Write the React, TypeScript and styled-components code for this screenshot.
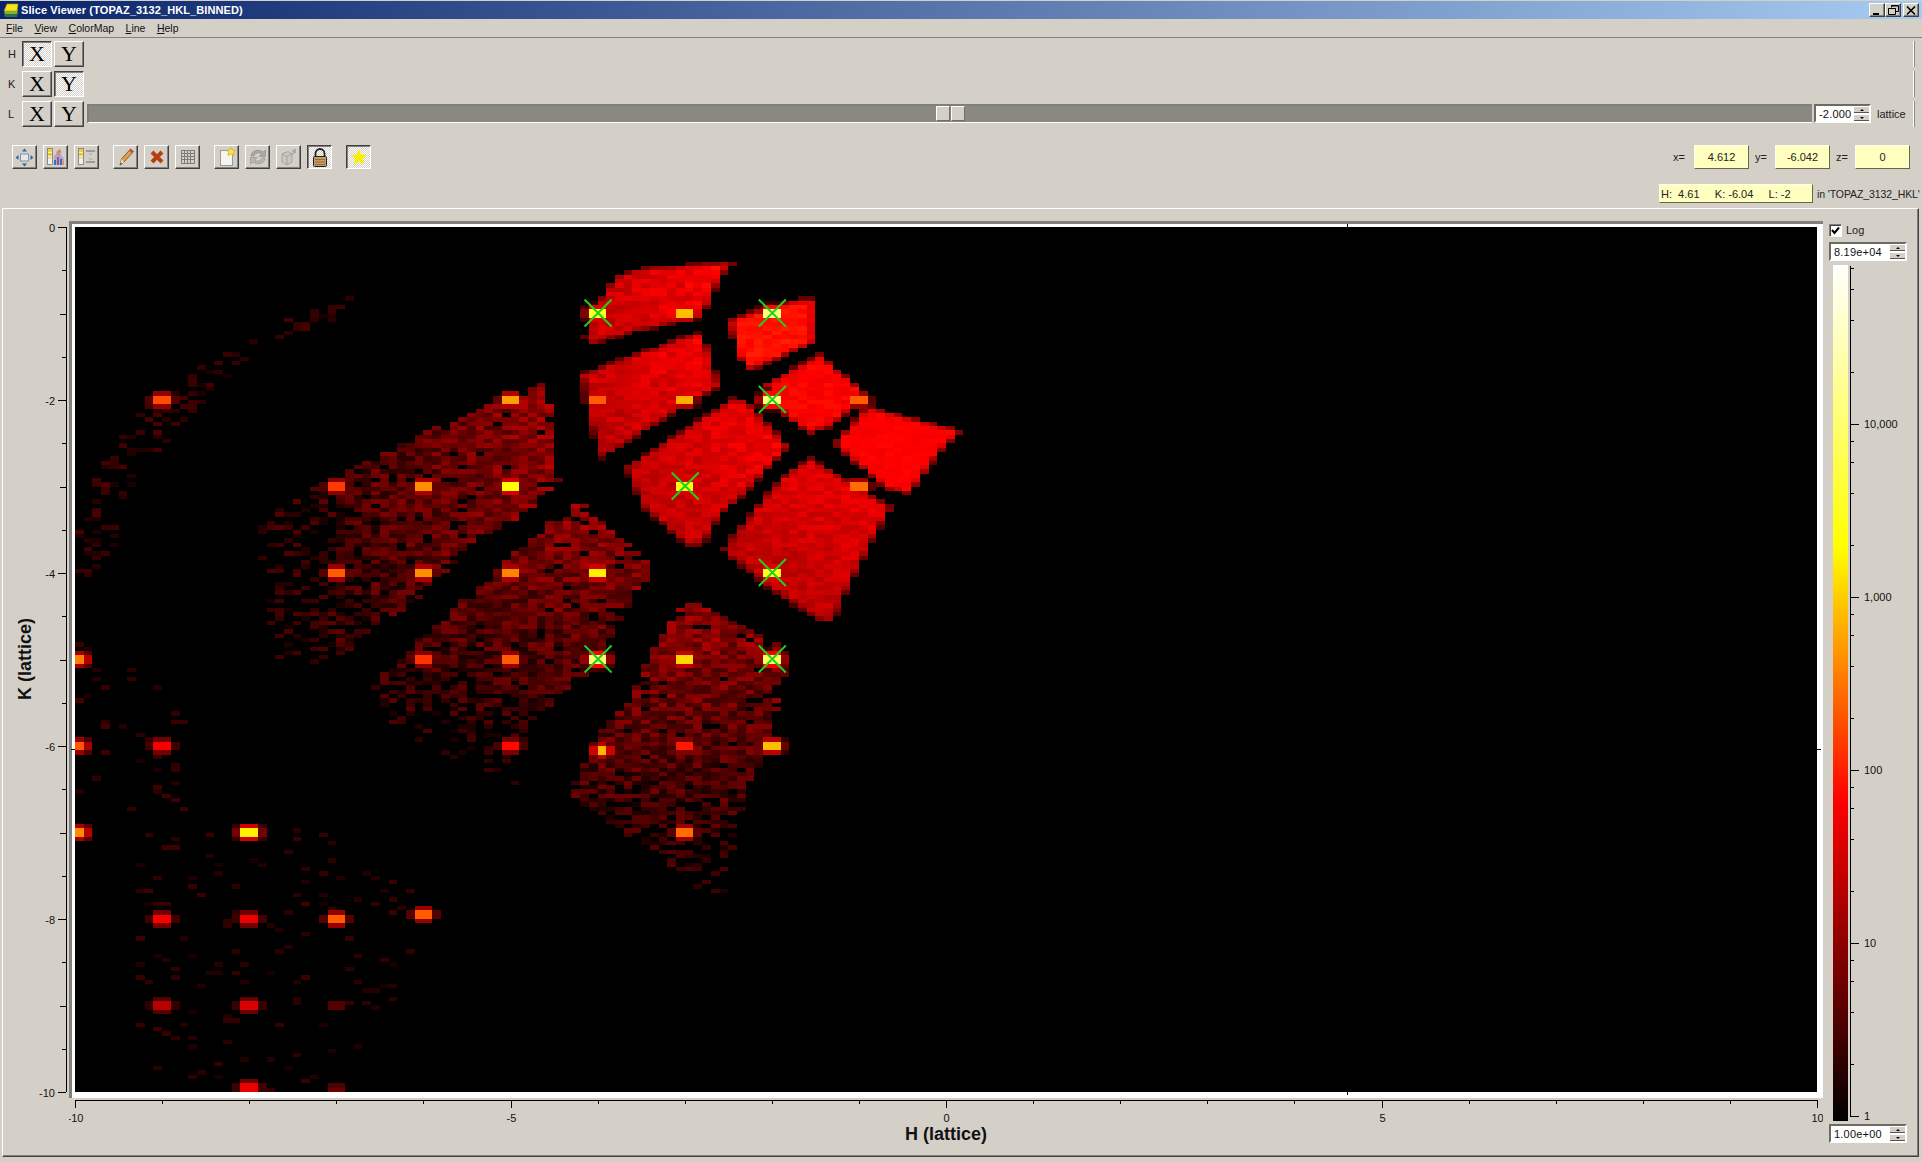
import { useMemo } from "react";
import styled, { createGlobalStyle, css } from "styled-components";

const FACE = "#d4d0c8";
const FONT = `"Liberation Sans", Arial, sans-serif`;

const GlobalStyle = createGlobalStyle`
  html, body { margin: 0; padding: 0; background: ${FACE}; }
  body { font-family: ${FONT}; font-size: 11px; color: #000; overflow: hidden; }
`;

const raised = css`
  border: 1px solid;
  border-color: #fff #404040 #404040 #fff;
  box-shadow: inset -1px -1px 0 #808080;
`;
const pressed = css`
  border: 1px solid;
  border-color: #404040 #fff #fff #404040;
  box-shadow: inset 1px 1px 0 #808080;
  background: repeating-conic-gradient(#fff 0 25%, #d4d0c8 0 50%) 0 0 / 2px 2px;
`;

const Window = styled.div`
  width: 1922px;
  height: 1162px;
  background: ${FACE};
  display: flex;
  flex-direction: column;
  overflow: hidden;
`;
const TitleBar = styled.div`
  height: 18px;
  margin: 1px 0 0 0;
  padding: 0 3px 0 3px;
  display: flex;
  align-items: center;
  background: linear-gradient(90deg, #0a246a 0%, #a6caf0 100%);
  color: #fff;
  font-weight: bold;
  font-size: 11px;
  flex: none;
`;
const TitleText = styled.span`
  margin-left: 2px;
  flex: 1;
  letter-spacing: 0.1px;
`;
const CaptionButton = styled.button<{ $gap?: number }>`
  width: 16px;
  height: 14px;
  margin-left: ${(p) => p.$gap ?? 0}px;
  padding: 0;
  background: ${FACE};
  ${raised}
  display: flex;
  align-items: center;
  justify-content: center;
`;
const MenuBar = styled.div`
  height: 18px;
  padding-left: 6px;
  display: flex;
  align-items: center;
  gap: 11.5px;
  border-bottom: 1px solid #808080;
  flex: none;
  color: #111;
  font-size: 10.5px;
`;
const Mnemonic = styled.span`
  text-decoration: underline;
`;
const Controls = styled.div`
  height: 170px;
  padding-top: 3px;
  box-sizing: border-box;
  display: flex;
  flex-direction: column;
  flex: none;
`;
const AxisRow = styled.div`
  height: 26px;
  margin-bottom: 4px;
  padding-right: 7px;
  display: flex;
  flex: none;
`;
const AxisLetter = styled.div`
  width: 14px;
  padding-left: 8px;
  display: flex;
  align-items: center;
  color: #222;
`;
const AxisButton = styled.button<{ $on?: boolean }>`
  width: 30px;
  height: 26px;
  margin-right: 2px;
  padding: 0;
  font-family: "Liberation Serif", "Times New Roman", serif;
  font-size: 22px;
  line-height: 22px;
  color: #000;
  background: ${FACE};
  ${(p) => (p.$on ? pressed : raised)}
`;
const Slider = styled.div`
  position: relative;
  flex: 1;
  height: 16px;
  margin: 3px 0 0 1px;
  background: #8a8981;
  border-top: 2px solid #7f7e79;
  border-left: 2px solid #7f7e79;
  box-sizing: content-box;
  border-bottom: 1px solid #fff;
  align-self: flex-start;
`;
const Handle = styled.div<{ $left: number }>`
  position: absolute;
  top: 0;
  left: ${(p) => p.$left}px;
  width: 14px;
  height: 15px;
  box-sizing: border-box;
  background: ${FACE};
  border: 1px solid;
  border-color: #fff #70706a #70706a #fff;
`;
const EdgeRule = styled.div<{ $push?: boolean }>`
  width: 1px;
  margin-left: ${(p) => (p.$push ? "auto" : "0")};
  background: #8f8d87;
  box-shadow: -1px 0 0 #fff;
`;
const Spin = styled.div<{ $w: number }>`
  width: ${(p) => p.$w}px;
  height: 19px;
  box-sizing: border-box;
  display: flex;
  align-items: center;
  background: #fff;
  border: 2px solid;
  border-color: #6c6b66 #fff #fff #6c6b66;
  flex: none;
`;
const SpinText = styled.div`
  flex: 1;
  padding-left: 3px;
  white-space: nowrap;
  color: #111;
  letter-spacing: 0.2px;
`;
const SpinArrows = styled.div`
  width: 15px;
  height: 15px;
  display: flex;
  flex-direction: column;
  gap: 1px;
  flex: none;
`;
const SpinArrow = styled.div<{ $down?: boolean }>`
  flex: 1;
  background: ${FACE};
  border-top: 1px solid #fff;
  border-bottom: 1px solid #555;
  display: flex;
  align-items: center;
  justify-content: center;
  &::after {
    content: "";
    border-left: 2px solid transparent;
    border-right: 2px solid transparent;
    ${(p) => (p.$down ? "border-top: 2px solid #000;" : "border-bottom: 2px solid #000;")}
  }
`;
const UnitText = styled.div`
  margin-left: 6px;
  display: flex;
  align-items: center;
  color: #222;
  width: 37px;
`;
const SpinSlot = styled.div`
  margin: 3px 0 0 2px;
`;
const ToolRow = styled.div`
  margin-top: 14px;
  height: 24px;
  padding-left: 12px;
  padding-right: 12px;
  display: flex;
  align-items: stretch;
  flex: none;
`;
const ToolGroup = styled.div<{ $gap?: number }>`
  display: flex;
  gap: 6px;
  margin-right: ${(p) => p.$gap ?? 14}px;
`;
const ToolButton = styled.button<{ $on?: boolean }>`
  width: 25px;
  height: 24px;
  padding: 0;
  background: ${FACE};
  display: flex;
  align-items: center;
  justify-content: center;
  ${(p) => (p.$on ? pressed : raised)}
`;
const Coords = styled.div`
  margin-left: auto;
  display: flex;
  align-items: stretch;
  color: #222;
`;
const CoordLabel = styled.div<{ $w: number; $inset?: boolean }>`
  width: ${(p) => p.$w}px;
  padding-left: ${(p) => (p.$inset ? 6 : 0)}px;
  box-sizing: border-box;
  display: flex;
  align-items: center;
`;
const Readout = styled.div<{ $w: number }>`
  width: ${(p) => p.$w}px;
  box-sizing: border-box;
  background: #ffffc0;
  border: 1px solid;
  border-color: #ffffe8 #66664c #66664c #ffffe8;
  display: flex;
  align-items: center;
  justify-content: center;
  color: #222;
  white-space: pre;
`;
const InfoRow = styled.div`
  margin-top: 15px;
  height: 19px;
  display: flex;
  justify-content: flex-end;
  flex: none;
`;
const InfoBox = styled(Readout)`
  justify-content: flex-start;
  padding-left: 1px;
`;
const InfoText = styled.div`
  width: 105px;
  margin-left: 4px;
  white-space: nowrap;
  display: flex;
  align-items: center;
  color: #222;
  font-size: 10.5px;
  letter-spacing: -0.1px;
`;
const PlotPanel = styled.div`
  width: 1917px;
  height: 949px;
  margin-left: 2px;
  box-sizing: border-box;
  border: 1px solid;
  border-color: #fff #404040 #404040 #fff;
  box-shadow: inset -1px -1px 0 #808080;
  display: grid;
  grid-template-columns: 66px 1754px 1fr;
  grid-template-rows: 12px 877px 1fr;
  flex: none;
`;
const YAxisSlot = styled.div`
  grid-column: 1;
  grid-row: 2;
`;
const XAxisSlot = styled.div`
  grid-column: 2;
  grid-row: 3;
`;
const Frame = styled.div`
  grid-column: 2;
  grid-row: 2;
  background: #fff;
  border-top: 3px solid #808080;
  border-left: 3px solid #808080;
  padding: 3px 6px 6px 3px;
  box-sizing: border-box;
`;
const Heatmap = styled.svg`
  display: block;
  background: #000;
  overflow: visible;
`;
const ScaleColumn = styled.div`
  grid-column: 3;
  grid-row: 1 / 4;
  padding: 15px 0 0 6px;
  display: flex;
  flex-direction: column;
  color: #222;
`;
const LogRow = styled.div`
  height: 13px;
  display: flex;
  align-items: center;
  gap: 4px;
  margin-bottom: 5px;
  line-height: 11px;
`;
const CheckBox = styled.div`
  width: 13px;
  height: 13px;
  box-sizing: border-box;
  background: #fff;
  border: 1px solid;
  border-color: #808080 #fff #fff #808080;
  box-shadow: inset 1px 1px 0 #404040;
  display: flex;
  align-items: center;
  justify-content: center;
`;
const ScaleBody = styled.div`
  height: 859px;
  margin: 4px 0 0 4px;
  display: flex;
  flex: none;
`;
const ColorBar = styled.div`
  width: 15px;
  height: 856px;
  margin-right: 2px;
  background: linear-gradient(0deg, #000 0%, #ff0000 37.5%, #ffff00 67%, #ffffff 100%);
`;
const AxisSvg = styled.svg`
  display: block;
  font-family: ${FONT};
  font-size: 11px;
`;

// detector panels in screen pixels, taken from the crops they were read off
type Pt = [number, number];
const crop = (ox: number, oy: number, pts: number[]): Pt[] => {
  const out: Pt[] = [];
  for (let i = 0; i < pts.length; i += 2) out.push([ox + pts[i] / 3, oy + pts[i + 1] / 3]);
  return out;
};
interface Region {
  pts: Pt[];
  base: number;
  noise: number;
  keep: number;
  tiltX?: number;
  tiltY?: number;
  edge?: boolean;
  fray?: number;
}
const REGIONS: Region[] = [
  { pts: crop(540, 240, [130, 300, 150, 220, 225, 105, 305, 80, 590, 60, 540, 115, 490, 235, 300, 275, 150, 320]), base: 0.33, noise: 0.04, keep: 1, tiltX: 0.08, edge: true },
  { pts: crop(540, 240, [565, 240, 625, 215, 770, 175, 825, 175, 825, 310, 770, 335, 630, 395, 590, 350]), base: 0.395, noise: 0.018, keep: 1, edge: true },
  { pts: crop(540, 240, [120, 400, 225, 360, 440, 285, 490, 275, 540, 440, 420, 510, 250, 620, 180, 660, 150, 560]), base: 0.315, noise: 0.04, keep: 1, tiltX: 0.06, tiltY: -0.04, edge: true },
  { pts: crop(540, 240, [670, 430, 840, 340, 960, 440, 960, 490, 880, 560, 810, 585, 730, 530]), base: 0.37, noise: 0.02, keep: 1, edge: true },
  { pts: crop(540, 240, [880, 610, 980, 495, 1270, 570, 1200, 640, 1110, 765, 1040, 750, 930, 660]), base: 0.37, noise: 0.012, keep: 1, edge: true },
  { pts: crop(540, 240, [252, 680, 580, 470, 620, 480, 750, 620, 620, 760, 540, 830, 490, 920, 440, 920, 310, 810]), base: 0.315, noise: 0.035, keep: 1, tiltX: 0.07, tiltY: -0.04, edge: true },
  { pts: crop(540, 240, [540, 930, 720, 710, 810, 650, 1060, 800, 1000, 900, 930, 1040, 880, 1150, 830, 1140, 700, 1060]), base: 0.305, noise: 0.035, keep: 1, tiltX: 0.04, tiltY: -0.07, edge: true },
  { pts: crop(240, 370, [30, 460, 130, 400, 290, 320, 480, 225, 640, 150, 790, 90, 915, 30, 970, 330, 850, 440, 700, 530, 520, 700, 420, 760, 320, 850, 200, 890, 100, 870, 60, 640]), base: 0.12, noise: 0.07, keep: 0.95, tiltX: 0.17, tiltY: -0.04, fray: 14 },
  { pts: crop(240, 370, [1020, 390, 1250, 600, 1180, 690, 1120, 780, 1100, 870, 940, 1000, 860, 1120, 830, 1240, 780, 1240, 600, 1170, 470, 1080, 400, 960, 450, 880, 530, 810, 640, 720, 780, 580, 900, 480]), base: 0.115, noise: 0.07, keep: 0.95, tiltX: 0.05, tiltY: -0.17, fray: 14 },
  { pts: crop(560, 600, [380, 0, 480, 40, 600, 100, 700, 150, 660, 280, 640, 400, 600, 500, 560, 580, 540, 680, 510, 810, 490, 880, 300, 830, 200, 700, 40, 600, 40, 520, 100, 420, 200, 300, 250, 180, 330, 70]), base: 0.125, noise: 0.07, keep: 0.95, tiltY: -0.17, fray: 14 },
  { pts: [[355, 296], [340, 320], [260, 345], [205, 400], [175, 430], [130, 490], [110, 560], [75, 590], [75, 540], [100, 470], [140, 410], [170, 385], [230, 350], [280, 320]], base: 0.075, noise: 0.035, keep: 0.28 },
  { pts: [[75, 630], [130, 640], [190, 700], [190, 810], [110, 810], [75, 790]], base: 0.07, noise: 0.03, keep: 0.07 },
  { pts: [[140, 830], [330, 830], [440, 900], [400, 1000], [320, 1092], [140, 1092]], base: 0.065, noise: 0.03, keep: 0.07 },
];

// Bragg peaks: h, k, peak level on the log scale
const PEAKS: [number, number, number][] = [
  [-4, -1, 0.74], [-3, -1, 0.62], [-2, -1, 0.86], [-4, -2, 0.5], [-3, -2, 0.6], [-2, -2, 0.86],
  [-1, -2, 0.5], [-5, -2, 0.58], [-3, -3, 0.72], [-1, -3, 0.52], [-2, -4, 0.74], [-4, -4, 0.68],
  [-5, -3, 0.7], [-6, -3, 0.56], [-7, -3, 0.46], [-5, -4, 0.55], [-6, -4, 0.56], [-7, -4, 0.5],
  [-4, -5, 0.85], [-5, -5, 0.5], [-6, -5, 0.45], [-3, -5, 0.65], [-2, -5, 0.82], [-5, -6, 0.4],
  [-3.95, -6.05, 0.52], [-3, -6, 0.42], [-2, -6, 0.62], [-3, -7, 0.52], [-9, -2, 0.48], [-9.95, -5, 0.46],
  [-9.95, -6, 0.42], [-9, -6, 0.38], [-9.95, -7, 0.47], [-8, -7, 0.68], [-9, -8, 0.38], [-8, -8, 0.36],
  [-7, -8, 0.5], [-6, -7.95, 0.5], [-9, -9, 0.28], [-8, -9, 0.33], [-7, -9, 0.13], [-8, -9.95, 0.36], [-7, -9.97, 0.15],
];

const CROSSES: [number, number][] = [[-4, -1], [-2, -1], [-2, -2], [-3, -3], [-2, -4], [-4, -5], [-2, -5]];

const PLOT_X = 75;
const PLOT_Y = 227;
const PLOT_W = 1742;
const PLOT_H = 865;
const BINS = 200;
const hToX = (h: number) => (h + 10) * (PLOT_W / 20);
const kToY = (k: number) => -k * (PLOT_H / 10);

const rng = (seed: number) => () => {
  seed = (seed + 0x6d2b79f5) | 0;
  let t = Math.imul(seed ^ (seed >>> 15), 1 | seed);
  t = (t + Math.imul(t ^ (t >>> 7), 61 | t)) ^ t;
  return ((t ^ (t >>> 14)) >>> 0) / 4294967296;
};

const inside = (x: number, y: number, pts: Pt[]) => {
  let hit = false;
  for (let i = 0, j = pts.length - 1; i < pts.length; j = i++) {
    const [xi, yi] = pts[i];
    const [xj, yj] = pts[j];
    if (yi > y !== yj > y && x < ((xj - xi) * (y - yi)) / (yj - yi) + xi) hit = !hit;
  }
  return hit;
};

const edgeDistance = (x: number, y: number, pts: Pt[]) => {
  let best = Infinity;
  for (let i = 0, j = pts.length - 1; i < pts.length; j = i++) {
    const [ax, ay] = pts[j];
    const [bx, by] = pts[i];
    const dx = bx - ax;
    const dy = by - ay;
    const u = Math.max(0, Math.min(1, ((x - ax) * dx + (y - ay) * dy) / (dx * dx + dy * dy)));
    best = Math.min(best, Math.hypot(x - ax - u * dx, y - ay - u * dy));
  }
  return best;
};

const colorFor = (t: number) => {
  const hex = (v: number) => Math.round(Math.max(0, Math.min(255, v))).toString(16).padStart(2, "0");
  if (t < 0.375) return `#${hex((t / 0.375) * 255)}0000`;
  if (t < 0.67) return `#ff${hex(((t - 0.375) / 0.295) * 255)}00`;
  return `#ffff${hex(((t - 0.67) / 0.33) * 255)}`;
};

const buildCells = () => {
  const rand = rng(3132);
  const grid = new Float32Array(BINS * BINS);
  const cw = PLOT_W / BINS;
  const ch = PLOT_H / BINS;
  for (const r of REGIONS) {
    const xs = r.pts.map((p) => p[0]);
    const ys = r.pts.map((p) => p[1]);
    const minX = Math.min(...xs);
    const maxX = Math.max(...xs);
    const minY = Math.min(...ys);
    const maxY = Math.max(...ys);
    for (let row = 0; row < BINS; row++) {
      for (let col = 0; col < BINS; col++) {
        const x = PLOT_X + (col + 0.5) * cw;
        const y = PLOT_Y + (row + 0.5) * ch;
        if (!inside(x, y, r.pts)) continue;
        const nx = (x - minX) / (maxX - minX) - 0.5;
        const ny = (y - minY) / (maxY - minY) - 0.5;
        const mean = r.base + (r.tiltX ?? 0) * nx + (r.tiltY ?? 0) * ny;
        let t = mean + (rand() * 2 - 1) * r.noise;
        let chance = r.keep * Math.min(1, mean / (r.base * 0.8));
        if (r.fray) chance *= Math.min(1, 0.5 + edgeDistance(x, y, r.pts) / r.fray);
        if (rand() > chance) continue;
        if (r.edge) t *= Math.min(1, edgeDistance(x, y, r.pts) / 8 + 0.35);
        grid[row * BINS + col] = Math.max(grid[row * BINS + col], t);
      }
    }
  }
  for (const [h, k, peak] of PEAKS) {
    const cx = hToX(h) / cw;
    const cy = kToY(k) / ch;
    for (let row = Math.floor(cy) - 6; row <= cy + 6; row++) {
      for (let col = Math.floor(cx) - 3; col <= cx + 3; col++) {
        if (row < 0 || col < 0 || row >= BINS || col >= BINS) continue;
        const dx = col + 0.5 - cx;
        const dy = row + 0.5 - cy;
        const t = 1.25 * peak * Math.exp(-(dx * dx) / 1.5 - (dy * dy) / 2.6);
        if (t > 0.07) grid[row * BINS + col] = Math.max(grid[row * BINS + col], t);
      }
    }
  }
  const cells: { x: number; y: number; fill: string }[] = [];
  grid.forEach((t, i) => {
    if (t > 0.035) cells.push({ x: i % BINS, y: Math.floor(i / BINS), fill: colorFor(t) });
  });
  return cells;
};

const TitleIcon = () => (
  <svg width="16" height="15" viewBox="0 0 16 15">
    <path d="M1 12 L3 9 H15 L14 14 H2 Z" fill="#2f6f3a" />
    <path d="M1 9.5 L3 7 H15 L14 11 H2 Z" fill="#79b23c" />
    <path d="M1 8 L4 1 H15 L14 8 Z" fill="#f4e51c" stroke="#a89a10" strokeWidth="0.6" />
  </svg>
);

const IconMove = () => (
  <svg width="19" height="19" viewBox="0 0 19 19">
    <rect x="5.5" y="6" width="8" height="7" fill="#e8e8ec" stroke="#8a8f98" />
    <path d="M9.5 0.5 L12 3.5 H7 Z M9.5 18.5 L12 15.5 H7 Z" fill="#2a62b0" />
    <path d="M0.5 9.5 L3.5 7 V12 Z M18.5 9.5 L15.5 7 V12 Z" fill="#2a62b0" />
  </svg>
);
const Swatch = () => (
  <>
    <rect x="1.5" y="1.5" width="5" height="16" fill="#f2f2f2" stroke="#777" strokeWidth="0.8" />
    <rect x="2" y="2" width="4" height="3" fill="#f6d51f" />
    <rect x="2" y="6" width="4" height="2.5" fill="#f2c019" />
    <rect x="2" y="9.5" width="4" height="2.5" fill="#e9e08a" />
  </>
);
const IconColorChart = () => (
  <svg width="20" height="20" viewBox="0 0 20 20">
    <Swatch />
    <path d="M8 18 V9 L11 6 L13 2 L15 8 L18 12 V18 Z" fill="#b9a0c8" />
    <path d="M10 5 L14 2 L15.5 5 L12 9 Z" fill="#d88a6c" />
    <rect x="8" y="13" width="2" height="5" fill="#3c6cc0" />
    <rect x="11" y="10" width="2" height="8" fill="#8c5a9c" />
    <rect x="14" y="12" width="2" height="6" fill="#3c6cc0" />
    <rect x="16.5" y="14" width="1.5" height="4" fill="#d8a040" />
  </svg>
);
const IconColorRange = () => (
  <svg width="20" height="20" viewBox="0 0 20 20">
    <Swatch />
    <path d="M9 4 H18 M9 15 H18" stroke="#666" strokeWidth="1" />
    <path d="M12 6 L13.5 8 L15 6 M12 13 L13.5 11 L15 13" stroke="#aaa" strokeWidth="1" fill="none" />
  </svg>
);
const IconPencil = () => (
  <svg width="20" height="20" viewBox="0 0 20 20">
    <path d="M4 18 L5.5 12 L14.5 2 L17.5 4.5 L8 15 Z" fill="#dfa24a" stroke="#6a4a1c" strokeWidth="0.8" />
    <path d="M14.5 2 L17.5 4.5 L16 6.3 L13 3.7 Z" fill="#c8503c" />
    <path d="M4 18 L5.5 12 L8 15 Z" fill="#f2dfb8" />
    <path d="M4 18 L4.6 15.8 L6 17 Z" fill="#222" />
  </svg>
);
const IconDelete = () => (
  <svg width="16" height="16" viewBox="0 0 16 16">
    <path d="M3 3 L13 13 M13 3 L3 13" stroke="#b8400f" strokeWidth="4" />
  </svg>
);
const IconGrid = () => (
  <svg width="16" height="16" viewBox="0 0 16 16">
    <path d="M1.5 1.5 H14.5 V14.5 H1.5 Z M1.5 4.5 H14.5 M1.5 7.5 H14.5 M1.5 10.5 H14.5 M4.5 1.5 V14.5 M7.5 1.5 V14.5 M10.5 1.5 V14.5" fill="none" stroke="#7c7c7c" strokeWidth="1" />
  </svg>
);
const IconNewDoc = () => (
  <svg width="20" height="20" viewBox="0 0 20 20">
    <rect x="3.5" y="3.5" width="12" height="15" fill="#f4f4f0" stroke="#9a9a90" />
    <path d="M14 0.5 L15.6 3 L18.5 3.4 L16.5 5.5 L17 8.5 L14 7 L11 8.5 L11.5 5.5 L9.5 3.4 L12.4 3 Z" fill="#f6e64a" stroke="#c8a818" strokeWidth="0.7" />
  </svg>
);
const IconRefresh = () => (
  <svg width="20" height="20" viewBox="0 0 20 20">
    <path d="M3 9 A7 6 0 0 1 15 5 L17.5 3 V9.5 H11 L13.5 7 A4.5 4 0 0 0 6 9 Z" fill="#a8a8a4" stroke="#8c8c88" strokeWidth="0.6" />
    <path d="M17 11 A7 6 0 0 1 5 15 L2.5 17 V10.5 H9 L6.5 13 A4.5 4 0 0 0 14 11 Z" fill="#b8b8b4" stroke="#8c8c88" strokeWidth="0.6" />
  </svg>
);
const IconCube = () => (
  <svg width="20" height="20" viewBox="0 0 20 20">
    <path d="M3 7 L9 4.5 L13 7 V15 L8 18 L3 15 Z" fill="#c8c8c4" stroke="#a4a4a0" />
    <path d="M3 7 L8 9.5 L13 7 M8 9.5 V18" fill="none" stroke="#a4a4a0" />
    <path d="M12 4 L17 1.5 V6.5 L15.5 5.8 L13.5 8 L12.5 7 L14.3 4.9 Z" fill="#a8a8a4" />
  </svg>
);
const IconLock = () => (
  <svg width="20" height="21" viewBox="0 0 20 21">
    <path d="M5.5 10 V6.5 A4.5 4.5 0 0 1 14.5 6.5 V10" fill="none" stroke="#222" strokeWidth="1.8" />
    <rect x="3.5" y="9.5" width="13" height="10" rx="1" fill="#c89a68" stroke="#222" />
    <path d="M5 12.5 H15 M5 15 H15 M5 17.5 H15" stroke="#8a6236" strokeWidth="0.8" />
  </svg>
);
const IconStar = () => (
  <svg width="18" height="18" viewBox="0 0 18 18">
    <path d="M9 1 L11.2 6.8 L17.4 7 L12.5 10.8 L14.2 16.8 L9 13.3 L3.8 16.8 L5.5 10.8 L0.6 7 L6.8 6.8 Z" fill="#f8f000" />
  </svg>
);

const MENU = [
  ["F", "ile"],
  ["V", "iew"],
  ["C", "olorMap"],
  ["L", "ine"],
  ["H", "elp"],
];

const YAxis = () => {
  const ticks = Array.from({ length: 21 }, (_, i) => -i / 2);
  return (
    <AxisSvg width="66" height="877">
      <line x1="63.5" x2="63.5" y1="6" y2="871" stroke="#000" />
      {ticks.map((k) => {
        const y = Math.round(6 + kToY(k)) + 0.5;
        const whole = Number.isInteger(k);
        const labelled = whole && k % 2 === 0;
        const len = labelled ? 8 : whole ? 6 : 4;
        return (
          <g key={k}>
            <line x1={63 - len} x2="63" y1={y} y2={y} stroke="#000" />
            {labelled && (
              <text x="52" y={y + 4} textAnchor="end" fill="#111">
                {k}
              </text>
            )}
          </g>
        );
      })}
      <text transform="translate(28 438) rotate(-90)" textAnchor="middle" fontWeight="bold" fontSize="18" fill="#111">
        K (lattice)
      </text>
    </AxisSvg>
  );
};

const XAxis = () => {
  const ticks = Array.from({ length: 21 }, (_, i) => i - 10);
  return (
    <AxisSvg width="1754" height="57">
      <line x1="6" x2="1748" y1="2.5" y2="2.5" stroke="#000" />
      {ticks.map((h) => {
        const x = Math.round(6 + hToX(h)) + 0.5;
        const labelled = h % 5 === 0;
        return (
          <g key={h}>
            <line x1={x} x2={x} y1="2" y2={labelled ? 10 : 6} stroke="#000" />
            {labelled && (
              <text x={x} y="24" textAnchor="middle" fill="#111">
                {h}
              </text>
            )}
          </g>
        );
      })}
      <text x="877" y="42" textAnchor="middle" fontWeight="bold" fontSize="18" fill="#111">
        H (lattice)
      </text>
    </AxisSvg>
  );
};

const ScaleAxis = () => {
  const decades = [1, 10, 100, 1000, 10000];
  const decadePx = 173;
  const toY = (v: number) => 851 - Math.log10(v) * decadePx;
  const labels = ["1", "10", "100", "1,000", "10,000"];
  return (
    <AxisSvg width="70" height="859">
      <line x1="0.5" x2="0.5" y1="1" y2="851" stroke="#000" />
      {decades.map((d, i) => (
        <g key={d}>
          <line x1="0" x2="9" y1={Math.round(toY(d)) + 0.5} y2={Math.round(toY(d)) + 0.5} stroke="#000" />
          <text x="14" y={toY(d) + 4} fill="#111">
            {labels[i]}
          </text>
          {[2, 4, 6, 8].map((m) => (
            <line key={m} x1="0" x2="4" y1={Math.round(toY(d * m)) + 0.5} y2={Math.round(toY(d * m)) + 0.5} stroke="#000" />
          ))}
        </g>
      ))}
    </AxisSvg>
  );
};

const SpinBox = ({ value, width }: { value: string; width: number }) => (
  <Spin $w={width}>
    <SpinText>{value}</SpinText>
    <SpinArrows>
      <SpinArrow />
      <SpinArrow $down />
    </SpinArrows>
  </Spin>
);

const AxisToggle = ({ letter, on }: { letter: string; on: "X" | "Y" | null }) => (
  <>
    <AxisLetter>{letter}</AxisLetter>
    <AxisButton $on={on === "X"}>X</AxisButton>
    <AxisButton $on={on === "Y"}>Y</AxisButton>
  </>
);

export default function App() {
  const cells = useMemo(buildCells, []);
  return (
    <Window>
      <GlobalStyle />
      <TitleBar>
        <TitleIcon />
        <TitleText>Slice Viewer (TOPAZ_3132_HKL_BINNED)</TitleText>
        <CaptionButton>
          <svg width="10" height="9" viewBox="0 0 10 9">
            <rect x="1" y="7" width="6" height="2" fill="#000" />
          </svg>
        </CaptionButton>
        <CaptionButton>
          <svg width="11" height="10" viewBox="0 0 11 10">
            <path d="M3.5 2.5 V0.5 H10.5 V6.5 H8 M0.5 3.5 H7.5 V9.5 H0.5 Z M0.5 3.5 H7.5 M3.5 1 H10.5" fill="none" stroke="#000" />
          </svg>
        </CaptionButton>
        <CaptionButton $gap={2}>
          <svg width="10" height="9" viewBox="0 0 10 9">
            <path d="M1 0.5 L9 8.5 M9 0.5 L1 8.5" stroke="#000" strokeWidth="1.6" />
          </svg>
        </CaptionButton>
      </TitleBar>
      <MenuBar>
        {MENU.map(([first, rest]) => (
          <span key={first}>
            <Mnemonic>{first}</Mnemonic>
            {rest}
          </span>
        ))}
      </MenuBar>
      <Controls>
        <AxisRow>
          <AxisToggle letter="H" on="X" />
          <EdgeRule $push />
        </AxisRow>
        <AxisRow>
          <AxisToggle letter="K" on="Y" />
          <EdgeRule $push />
        </AxisRow>
        <AxisRow>
          <AxisToggle letter="L" on={null} />
          <Slider>
            <Handle $left={847} />
            <Handle $left={862} />
          </Slider>
          <SpinSlot>
            <SpinBox value="-2.000" width={57} />
          </SpinSlot>
          <UnitText>lattice</UnitText>
          <EdgeRule />
        </AxisRow>
        <ToolRow>
          <ToolGroup>
            <ToolButton><IconMove /></ToolButton>
            <ToolButton><IconColorChart /></ToolButton>
            <ToolButton><IconColorRange /></ToolButton>
          </ToolGroup>
          <ToolGroup>
            <ToolButton><IconPencil /></ToolButton>
            <ToolButton><IconDelete /></ToolButton>
            <ToolButton><IconGrid /></ToolButton>
          </ToolGroup>
          <ToolGroup>
            <ToolButton><IconNewDoc /></ToolButton>
            <ToolButton><IconRefresh /></ToolButton>
            <ToolButton><IconCube /></ToolButton>
            <ToolButton $on><IconLock /></ToolButton>
          </ToolGroup>
          <ToolGroup $gap={0}>
            <ToolButton $on><IconStar /></ToolButton>
          </ToolGroup>
          <Coords>
            <CoordLabel $w={21}>x=</CoordLabel>
            <Readout $w={55}>4.612</Readout>
            <CoordLabel $w={26} $inset>y=</CoordLabel>
            <Readout $w={55}>-6.042</Readout>
            <CoordLabel $w={25} $inset>z=</CoordLabel>
            <Readout $w={55}>0</Readout>
          </Coords>
        </ToolRow>
        <InfoRow>
          <InfoBox $w={154}>{"H:  4.61     K: -6.04     L: -2"}</InfoBox>
          <InfoText>in 'TOPAZ_3132_HKL'</InfoText>
        </InfoRow>
      </Controls>
      <PlotPanel>
        <YAxisSlot>
          <YAxis />
        </YAxisSlot>
        <Frame>
          <Heatmap width={PLOT_W} height={PLOT_H}>
            <svg viewBox={`0 0 ${BINS} ${BINS}`} width={PLOT_W} height={PLOT_H} preserveAspectRatio="none" shapeRendering="crispEdges">
              {cells.map((c) => (
                <rect key={`${c.x}:${c.y}`} x={c.x} y={c.y} width="1" height="1" fill={c.fill} />
              ))}
            </svg>
            {CROSSES.map(([h, k]) => {
              const x = hToX(h) + 0.5;
              const y = kToY(k) - 0.5;
              return (
                <path
                  key={`${h}:${k}`}
                  d={`M${x - 13.5} ${y - 13.5} L${x + 13.5} ${y + 13.5} M${x + 13.5} ${y - 13.5} L${x - 13.5} ${y + 13.5}`}
                  stroke="#1fd01f"
                  strokeWidth="2"
                />
              );
            })}
            <path d="M1272.5 -3 V0 M1272.5 865 V868 M-4 522.5 H0 M1742 522.5 H1746" stroke="#000" strokeWidth="1" />
          </Heatmap>
        </Frame>
        <XAxisSlot>
          <XAxis />
        </XAxisSlot>
        <ScaleColumn>
          <LogRow>
            <CheckBox>
              <svg width="9" height="9" viewBox="0 0 9 9">
                <path d="M1 4 L3.5 7 L8 1.5" fill="none" stroke="#000" strokeWidth="2" />
              </svg>
            </CheckBox>
            Log
          </LogRow>
          <SpinBox value="8.19e+04" width={78} />
          <ScaleBody>
            <ColorBar />
            <ScaleAxis />
          </ScaleBody>
          <SpinBox value="1.00e+00" width={78} />
        </ScaleColumn>
      </PlotPanel>
    </Window>
  );
}
